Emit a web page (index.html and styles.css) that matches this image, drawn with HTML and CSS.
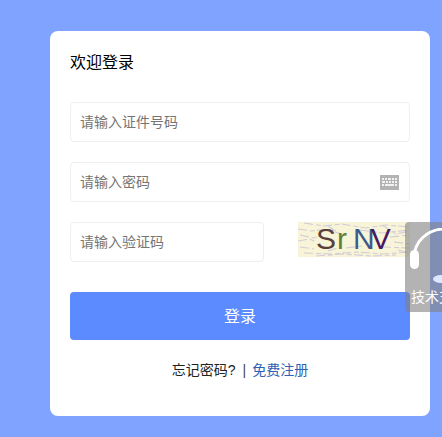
FILE: index.html
```html
<!DOCTYPE html>
<html lang="zh-CN">
<head>
<meta charset="utf-8">
<title>欢迎登录</title>
<link rel="stylesheet" href="styles.css">
</head>
<body>
<main class="card">
  <h1 class="title">欢迎登录</h1>
  <div class="field">
    <span class="placeholder">请输入证件号码</span>
  </div>
  <div class="field">
    <span class="placeholder">请输入密码</span>
    <svg class="kbd" viewBox="0 0 19 15" width="19" height="15" aria-hidden="true">
      <path fill="#b3b3b3" d="M0 0h19v15H0z"/>
      <path fill="#f2f2f2" d="M2 3h2v2H2zM5 3h2v2H5zM8 3h3v2H8zM12 3h2v2h-2zM15 3h2v2h-2zM2 6h3v2H2zM6 6h2v2H6zM9 6h2v2H9zM12 6h2v2h-2zM15 6h2v2h-2zM2 9h2v2H2zM5 9h9v2H5zM15 9h2v2h-2z"/>
    </svg>
  </div>
  <div class="captcha-row">
    <div class="field field-short">
      <span class="placeholder">请输入验证码</span>
    </div>
    <div class="captcha">
      <svg class="noise" viewBox="0 0 112 35" width="112" height="35" aria-hidden="true">
        <path fill="none" stroke="#d2ccd6" stroke-width="1.1" stroke-dasharray="9 3 5 2" d="M6 1l20 3 18-2 24 4 20-3 24 2M0 7l14 2 16-2 10 4M62 8l22 3 28-3M2 13l14 3 6-2M30 4l12 8M84 3l14 9 14-3M92 15l20-2M0 19l12-2 6 3M96 20l16 2M2 25l14 2M48 26l16-2M84 25l28 1M6 31l28 1 24-2 26 2 28-2M18 34l26-2 30 2 24-1M30 29l12-4M100 28l12 3"/>
      </svg>
      <span class="captcha-text"><span class="c1">S</span><span class="c2">r</span><span class="c3">N</span><span class="c4">V</span></span>
    </div>
  </div>
  <button class="submit" type="button">登录</button>
  <p class="links">忘记密码?<span class="sep">|</span><a class="register" href="#">免费注册</a></p>
</main>
<aside class="support">
  <svg class="headset" viewBox="0 0 60 70" width="60" height="70" aria-hidden="true">
    <path fill="none" stroke="#fff" stroke-width="3" d="M9 30C9 14 22 1 40 1s30 13 30 29"/>
    <rect x="5" y="22" width="9" height="19" rx="4.5" fill="#fff"/>
    <ellipse cx="36" cy="51" rx="8" ry="4" fill="#dfe6ff"/>
  </svg>
  <span class="support-text">技术支持</span>
</aside>
</body>
</html>
```
FILE: styles.css
```css
* { box-sizing: border-box; }
html, body { height: 100%; }
body {
  margin: 0;
  position: relative;
  overflow: hidden;
  padding: 31px 0 0 50px;
  background: #7fa3ff;
  font-family: "Liberation Sans", "Noto Sans CJK SC", sans-serif;
}
.card {
  width: 380px;
  height: 385px;
  padding: 21px 20px 20px;
  background: #fff;
  border-radius: 8px;
}
.title {
  margin: 0 0 28px;
  font-size: 16px;
  font-weight: 400;
  line-height: 22px;
  color: #000;
}
.field {
  display: flex;
  align-items: center;
  justify-content: space-between;
  height: 40px;
  margin-bottom: 20px;
  padding: 0 10px 0 9px;
  border: 1px solid #eeeeee;
  border-radius: 4px;
  background: #fff;
}
.placeholder { font-size: 14px; line-height: 20px; color: #757575; }
.kbd { display: block; }
.captcha-row { display: flex; justify-content: space-between; align-items: flex-start; }
.field-short { width: 194px; margin-bottom: 30px; }
.captcha {
  position: relative;
  width: 112px;
  height: 35px;
  padding-left: 18px;
  background: #f8f4d8;
  overflow: hidden;
}
.noise { position: absolute; inset: 0; }
.captcha-text {
  position: relative;
  display: block;
  font-family: "Liberation Sans", sans-serif;
  font-size: 30px;
  line-height: 34px;
  white-space: nowrap;
}
.c2 { color: #5e8038; margin-left: 1px; margin-right: 6px; }
.c1 { color: #5b3f3a; }
.c3 { color: #3c5a8c; }
.c4 { color: #47185f; margin-left: -4px; }
.submit {
  display: block;
  width: 100%;
  height: 48px;
  padding: 0 0 2px;
  border: 0;
  border-radius: 4px;
  background: #5c8bff;
  color: #fff;
  font: 400 16px "Liberation Sans", "Noto Sans CJK SC", sans-serif;
}
.links {
  margin: 20px 0 0;
  font-size: 14px;
  line-height: 20px;
  text-align: center;
  color: #222;
}
.sep { margin: 0 6px 0 7px; color: #444; }
.register { color: #2f62b5; text-decoration: none; }
.support {
  position: absolute;
  left: 405px;
  top: 222px;
  width: 100px;
  height: 90px;
  border-radius: 4px;
  background: rgba(128, 128, 128, 0.6);
  overflow: hidden;
}
.headset { position: absolute; left: 0; top: 6px; }
.support-text {
  position: absolute;
  left: 6px;
  top: 65px;
  font-size: 14px;
  line-height: 20px;
  color: #fff;
  white-space: nowrap;
}
```
